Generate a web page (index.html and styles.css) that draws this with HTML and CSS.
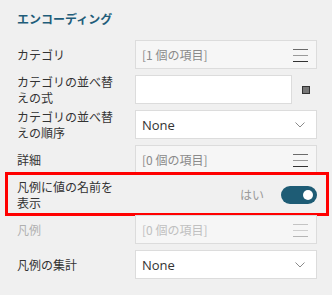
FILE: index.html
```html
<!DOCTYPE html>
<html lang="ja">
<head>
<meta charset="utf-8">
<link rel="stylesheet" href="styles.css">
</head>
<body>
<div class="panel">
  <div class="heading">エンコーディング</div>

  <div class="row">
    <div class="label">カテゴリ</div>
    <div class="box well"><span class="ph">[1 個の項目]</span>
      <svg class="menu" width="15" height="15" viewBox="0 0 15 15"><rect x="0" y="1" width="15" height="1" fill="#6b6b6b"/><rect x="0" y="7" width="15" height="1" fill="#9a9a9a"/><rect x="0" y="13" width="15" height="1" fill="#333"/></svg>
    </div>
  </div>

  <div class="row">
    <div class="label">カテゴリの並べ替えの式</div>
    <div class="ctl-with-extra">
      <div class="box input narrow"></div>
      <span class="square"></span>
    </div>
  </div>

  <div class="row">
    <div class="label">カテゴリの並べ替えの順序</div>
    <div class="box input"><span class="val">None</span>
      <svg class="chev" width="10" height="6" viewBox="0 0 10 6"><path d="M0.5 0.5 L5 5 L9.5 0.5" fill="none" stroke="#8a8a8a" stroke-width="1"/></svg>
    </div>
  </div>

  <div class="row">
    <div class="label">詳細</div>
    <div class="box well"><span class="ph">[0 個の項目]</span>
      <svg class="menu" width="15" height="15" viewBox="0 0 15 15"><rect x="0" y="1" width="15" height="1" fill="#6b6b6b"/><rect x="0" y="7" width="15" height="1" fill="#9a9a9a"/><rect x="0" y="13" width="15" height="1" fill="#333"/></svg>
    </div>
  </div>

  <div class="row highlighted">
    <div class="label">凡例に値の名前を表示</div>
    <div class="toggle-wrap">
      <span class="yes">はい</span>
      <span class="toggle"><span class="knob"></span></span>
    </div>
    <div class="redbox"></div>
  </div>

  <div class="row disabled">
    <div class="label">凡例</div>
    <div class="box well"><span class="ph">[0 個の項目]</span>
      <svg class="menu" width="15" height="15" viewBox="0 0 15 15"><rect x="0" y="1" width="15" height="1" fill="#c4c4c4"/><rect x="0" y="7" width="15" height="1" fill="#cfcfcf"/><rect x="0" y="13" width="15" height="1" fill="#b5b5b5"/></svg>
    </div>
  </div>

  <div class="row">
    <div class="label">凡例の集計</div>
    <div class="box input"><span class="val">None</span>
      <svg class="chev" width="10" height="6" viewBox="0 0 10 6"><path d="M0.5 0.5 L5 5 L9.5 0.5" fill="none" stroke="#8a8a8a" stroke-width="1"/></svg>
    </div>
  </div>
</div>
</body>
</html>
```

FILE: styles.css
```css
html, body {
  margin: 0;
  padding: 0;
  background: #f0f0f0;
}
body {
  width: 332px;
  height: 295px;
  overflow: hidden;
  font-family: "Noto Sans CJK JP", "Noto Sans", sans-serif;
  font-size: 12px;
  color: #333;
}
.panel {
  padding-top: 11px;
}
.heading {
  padding-left: 17px;
  font-size: 12px;
  line-height: 16px;
  font-weight: bold;
  color: #1f5d7a;
  height: 16px;
  margin-bottom: 10px;
}
.row {
  position: relative;
  display: grid;
  grid-template-columns: 118px 182px;
  align-items: center;
  height: 35px;
  padding-left: 17px;
}
.label {
  width: 104px;
  line-height: 16px;
  color: #333;
}
.box {
  box-sizing: border-box;
  height: 29px;
  border: 1px solid #dcdcdc;
  display: flex;
  align-items: center;
  justify-content: space-between;
  padding: 0 8px 0 6px;
}
.well {
  background: #f6f6f6;
}
.input {
  background: #fff;
}
.narrow {
  width: 157px;
}
.ctl-with-extra {
  display: flex;
  align-items: center;
  gap: 10px;
}
.square {
  width: 8px;
  height: 8px;
  box-sizing: border-box;
  background: #777;
  border: 1px solid #333;
}
.ph {
  color: #8a8a8a;
  font-family: "Noto Sans CJK JP", sans-serif;
}
.val {
  color: #333;
  font-family: "Open Sans", "Noto Sans", sans-serif;
  font-size: 13px;
}
.menu {
  display: block;
  margin-top: 1px;
}
.chev {
  display: block;
  margin-right: 3px;
}
.toggle-wrap {
  display: flex;
  justify-content: flex-end;
  align-items: center;
  gap: 17px;
}
.yes {
  color: #9a9a9a;
}
.toggle {
  width: 36px;
  height: 18px;
  border-radius: 9px;
  background: #1e5c75;
  display: flex;
  align-items: center;
  justify-content: flex-end;
  padding-right: 4px;
  box-sizing: border-box;
}
.knob {
  width: 10px;
  height: 10px;
  border-radius: 50%;
  background: #fff;
}
.redbox {
  position: absolute;
  left: 5px;
  right: 3px;
  top: -5px;
  bottom: -4px;
  border: 3px solid #ff0000;
  pointer-events: none;
}
.disabled .label {
  color: #b0b0b0;
}
.disabled .ph {
  color: #c0c0c0;
}
```
